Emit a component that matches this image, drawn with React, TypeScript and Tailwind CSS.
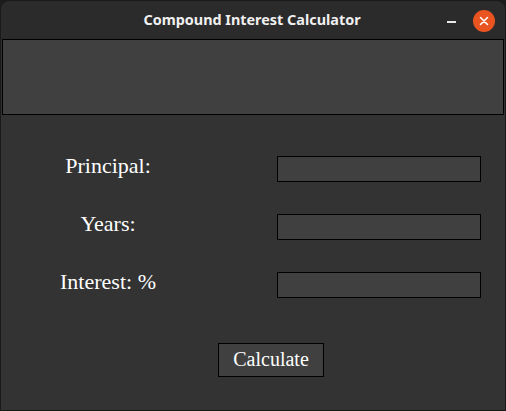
export default function App() {
  const rows = ["Principal:", "Years:", "Interest: %"];

  return (
    <div className="w-[506px] h-[411px] bg-[#1c1c1c]">
      <div className="w-full h-full flex flex-col rounded-t-[10px] border border-[#1a1a1a] overflow-hidden bg-[#333333]">
        <div className="h-[38px] bg-[#2b2b2b] relative flex items-center justify-center shrink-0">
          <span className="text-[14.4px] font-bold text-[#f0f0f0] font-['Noto_Sans',sans-serif] pr-[2px]">
            Compound Interest Calculator
          </span>
          <div className="absolute left-[446px] top-[20px] w-[9px] h-[1.5px] bg-[#e8e8e8]" />
          <div className="absolute left-[472px] top-[9px] w-[22px] h-[22px] rounded-full bg-[#e95420] flex items-center justify-center">
            <svg width="10" height="10" viewBox="0 0 10 10">
              <path d="M1.5 1.5 L8.5 8.5 M8.5 1.5 L1.5 8.5" stroke="white" strokeWidth="1.6" strokeLinecap="round" />
            </svg>
          </div>
        </div>
        <div className="flex-1 flex flex-col px-[1px] font-['Liberation_Serif',serif] text-white">
          <div className="h-[76px] bg-[#404040] border border-black" />
          <div className="flex flex-col gap-[32px] mt-[41px]">
            {rows.map((r) => (
              <div key={r} className="flex items-center h-[26px]">
                <div className="w-[212px] text-center text-[22px] leading-none pb-[6px]">{r}</div>
                <div className="ml-[63px] w-[204px] h-[26px] bg-[#404040] border border-black" />
              </div>
            ))}
          </div>
          <div className="flex mt-[45px] pl-[216px]">
            <button className="w-[106px] h-[34px] bg-[#404040] border border-black text-[20px] leading-none text-white pb-[2px]">
              Calculate
            </button>
          </div>
        </div>
      </div>
    </div>
  );
}
